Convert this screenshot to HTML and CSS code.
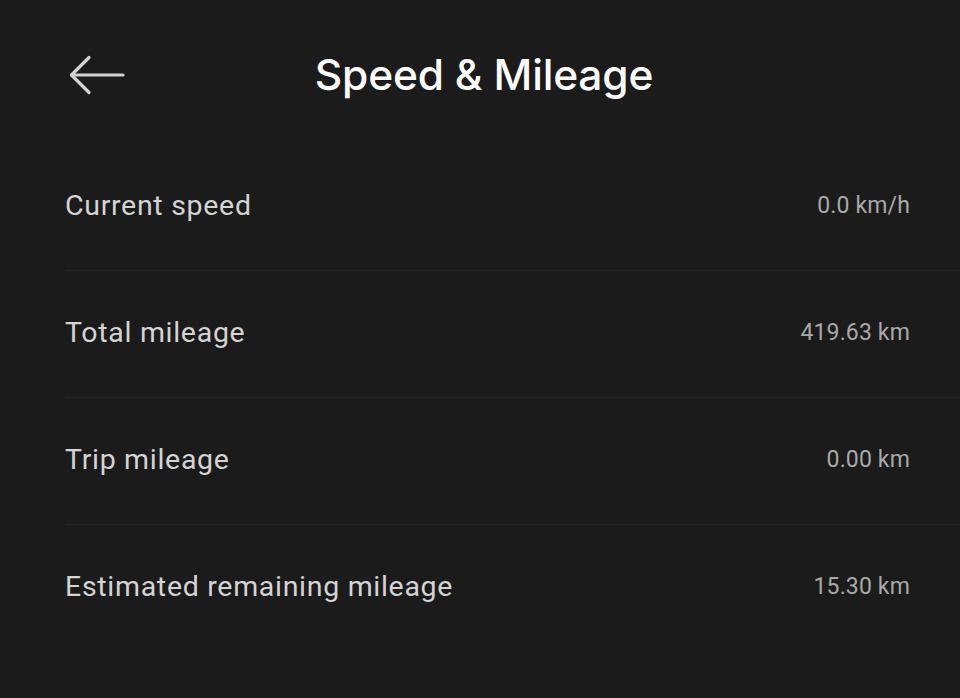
FILE: index.html
```html
<!DOCTYPE html>
<html lang="en">
<head>
<meta charset="utf-8">
<title>Speed &amp; Mileage</title>
<link rel="stylesheet" href="styles.css">
</head>
<body>
<div class="screen">
  <header class="header">
    <button class="back" aria-label="Back">
      <svg width="60" height="40" viewBox="0 0 60 40" fill="none" stroke="#d2d2d2" stroke-width="3.2" stroke-linecap="round" stroke-linejoin="round">
        <path d="M3.5 20 H55"/>
        <path d="M21 2.5 L3.5 20 L21 37.5"/>
      </svg>
    </button>
    <h1 class="title">Speed &amp; Mileage</h1>
  </header>
  <ul class="list">
    <li class="row"><span class="label">Current speed</span><span class="value">0.0 km/h</span></li>
    <li class="row"><span class="label">Total mileage</span><span class="value">419.63 km</span></li>
    <li class="row"><span class="label">Trip mileage</span><span class="value">0.00 km</span></li>
    <li class="row last"><span class="label">Estimated remaining mileage</span><span class="value">15.30 km</span></li>
  </ul>
</div>
</body>
</html>
```
FILE: styles.css
```css
html, body {
  margin: 0;
  padding: 0;
  background: #1b1b1b;
}
.screen {
  width: 960px;
  height: 698px;
  background: #1b1b1b;
  overflow: hidden;
}
.header {
  display: grid;
  grid-template-columns: 1fr auto 1fr;
  align-items: center;
  height: 48px;
  padding: 51px 0 45px;
}
.back {
  justify-self: start;
  margin-left: 68px;
  padding: 0;
  border: 0;
  background: none;
  width: 60px;
  height: 40px;
  display: flex;
}
.title {
  margin: 0;
  font-family: Inter, "Noto Sans", sans-serif;
  font-weight: 500;
  font-size: 42.5px;
  line-height: 48px;
  color: #ffffff;
  letter-spacing: -0.2px;
  transform: translateX(4px);
}
.list {
  list-style: none;
  margin: 0;
  padding: 0 0 0 65px;
}
.row {
  display: flex;
  justify-content: space-between;
  align-items: center;
  height: 126px;
  padding-right: 50px;
  border-bottom: 1px solid #242424;
}
.row.last {
  border-bottom: 0;
}
.label {
  font-family: Roboto, "Liberation Sans", sans-serif;
  font-size: 28.5px;
  color: #d4d4d4;
  margin-top: -3px;
  letter-spacing: 0.7px;
}
.value {
  font-family: Roboto, "Liberation Sans", sans-serif;
  font-size: 23px;
  color: #a9a9a9;
  margin-top: -3px;
  letter-spacing: 0.15px;
}
```
